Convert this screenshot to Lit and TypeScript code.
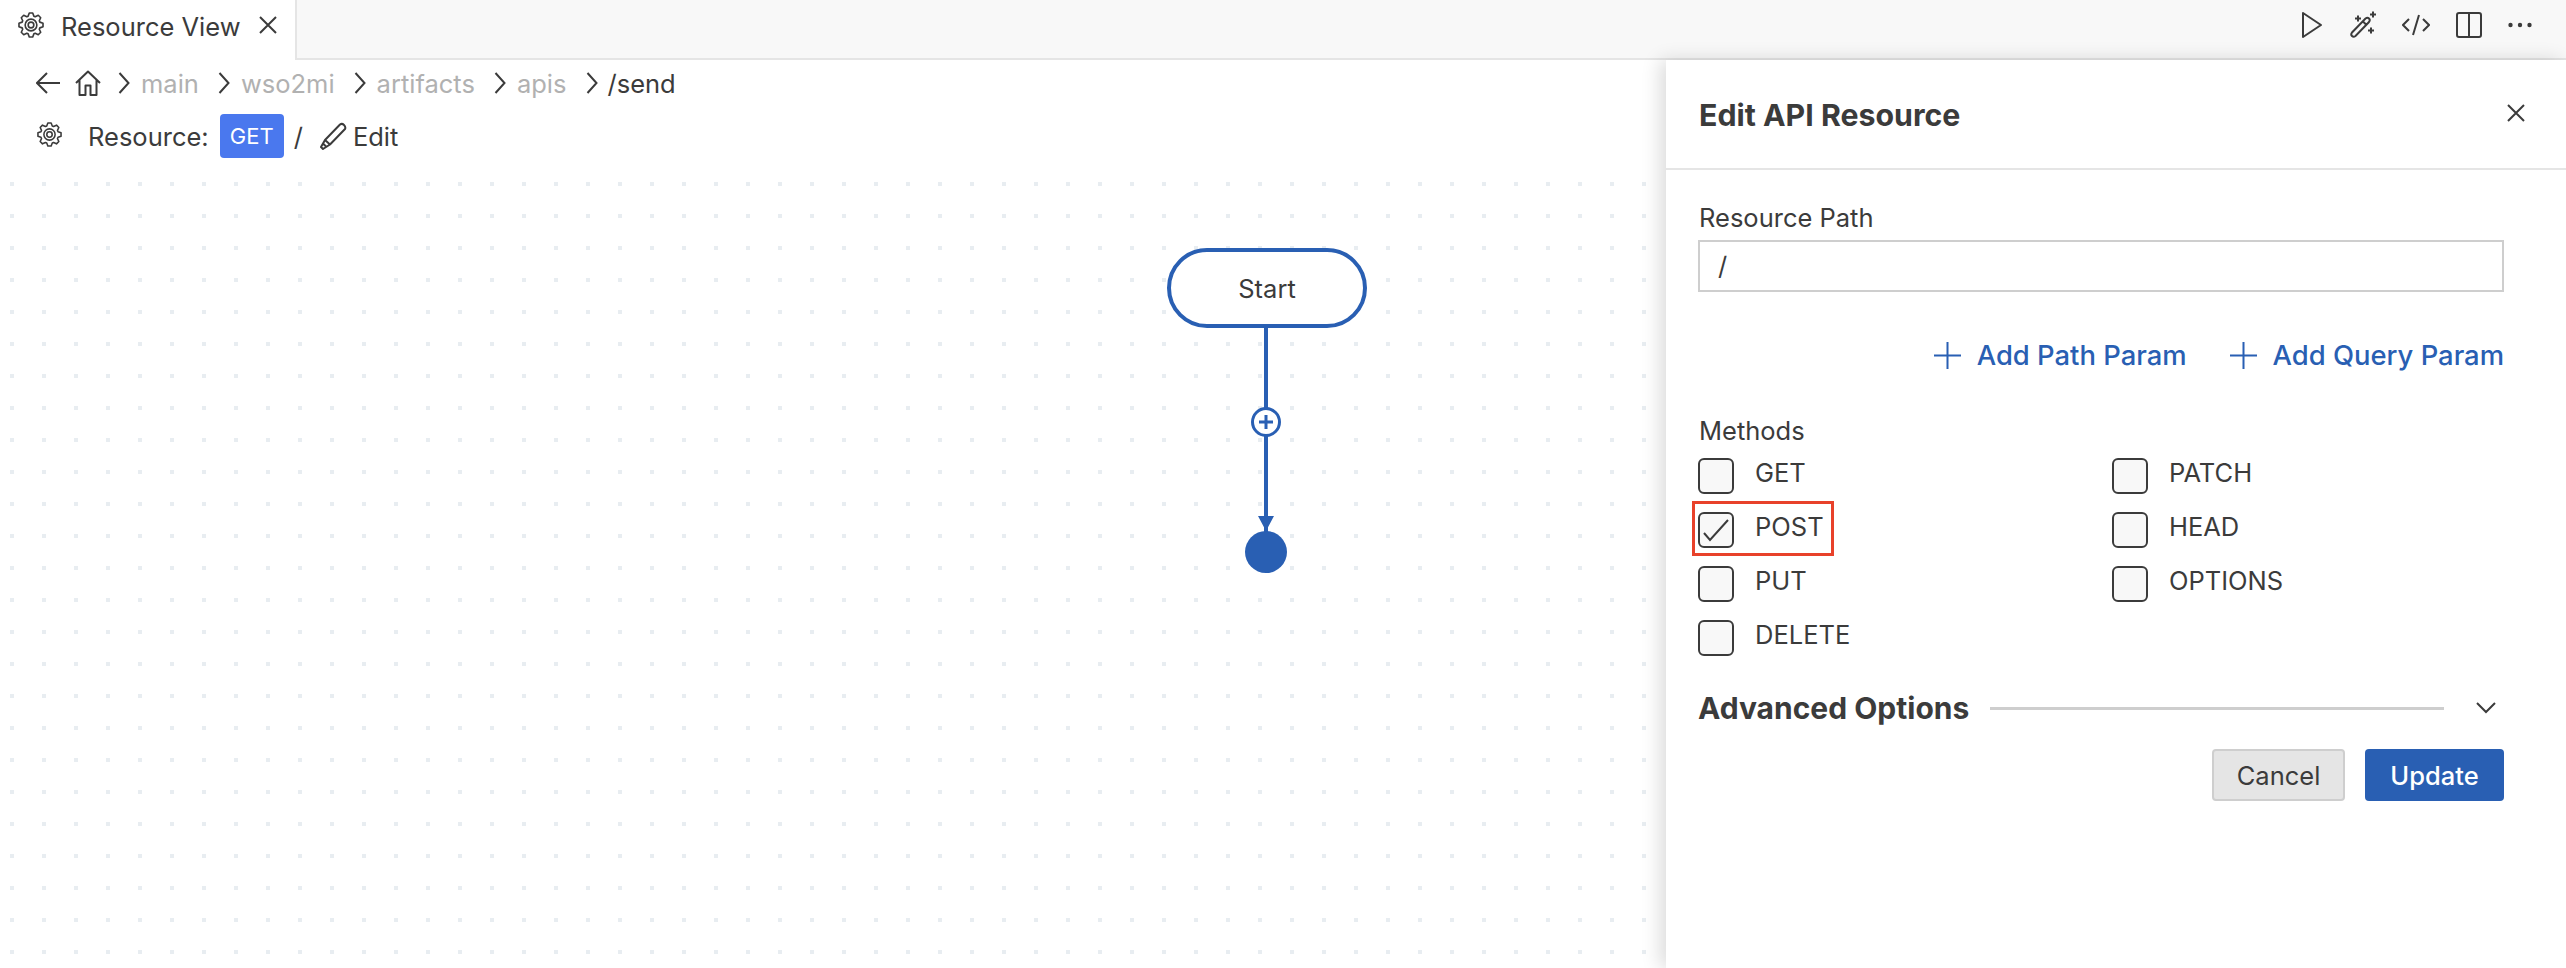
import { LitElement, html, css, svg } from "lit";
import { customElement } from "lit/decorators.js";

// 8 toothed gear outline, centred on 12,12
const gearPath = (): string => {
  const pts: string[] = [];
  const teeth = 8;
  for (let i = 0; i < teeth; i++) {
    const a = (i / teeth) * Math.PI * 2 - Math.PI / 2;
    const step = (Math.PI * 2) / teeth;
    const at = (r: number, off: number) =>
      `${(12 + r * Math.cos(a + off)).toFixed(2)} ${(12 + r * Math.sin(a + off)).toFixed(2)}`;
    pts.push(at(8.6, -step * 0.4), at(11.2, -step * 0.18), at(11.2, step * 0.18), at(8.6, step * 0.4));
  }
  return `M${pts.join("L")}Z`;
};

const gear = (size: number) => html`<svg
  class="icon"
  width=${size}
  height=${size}
  viewBox="0 0 24 24"
  fill="none"
  stroke="#3b3b3b"
  stroke-width="1.5"
  stroke-linejoin="round"
>
  <path d=${gearPath()}></path>
  <circle cx="12" cy="12" r="5.4"></circle>
  <circle cx="12" cy="12" r="2.6"></circle>
</svg>`;

const chevronRight = html`<svg class="icon crumb-chevron" width="12" height="22" viewBox="0 0 12 22" fill="none" stroke="#3b3b3b" stroke-width="2">
  <path d="M1.5 1l9 10-9 10"></path>
</svg>`;

const close = (size: number) => html`<svg class="icon" width=${size} height=${size} viewBox="0 0 18 18" fill="none" stroke="#3b3b3b" stroke-width="2">
  <path d="M1 1l16 16M17 1L1 17"></path>
</svg>`;

const plus = html`<svg class="icon" width="27" height="27" viewBox="0 0 27 27" fill="none" stroke="#295fb3" stroke-width="2">
  <path d="M13.5 0v27M0 13.5h27"></path>
</svg>`;

const checkMark = svg`<path d="M4 19l6 7L28 6" fill="none" stroke="#3b3b3b" stroke-width="2"></path>`;

const METHODS = [
  { name: "GET", checked: false },
  { name: "PATCH", checked: false },
  { name: "POST", checked: true },
  { name: "HEAD", checked: false },
  { name: "PUT", checked: false },
  { name: "OPTIONS", checked: false },
  { name: "DELETE", checked: false },
];

const CRUMBS = ["main", "wso2mi", "artifacts", "apis"];

@customElement("app-root")
export class AppRoot extends LitElement {
  static styles = css`
    :host {
      display: block;
      width: 2566px;
      height: 968px;
      overflow: hidden;
      background: #fff;
      color: #3b3b3b;
      font-family: Inter, "Liberation Sans", sans-serif;
      font-size: 25.5px;
      line-height: 32px;
    }

    * {
      box-sizing: border-box;
    }

    .icon {
      display: block;
      flex: none;
    }

    .tabs {
      display: flex;
      align-items: stretch;
      height: 60px;
      background: #f8f8f8;
      border-bottom: 2px solid #e5e5e5;
    }

    .tab {
      display: flex;
      align-items: center;
      width: 297px;
      height: 60px;
      padding: 0 0 10px 18px;
      background: #fff;
      border-right: 2px solid #e5e5e5;
    }

    .tab-title {
      margin: 3px 18px 0 17px;
    }

    .toolbar {
      display: flex;
      align-items: center;
      margin-left: auto;
      padding: 0 34px 8px 0;
    }

    .tool {
      display: block;
      flex: none;
    }

    .body {
      display: flex;
      height: 908px;
    }

    .main {
      flex: 1;
      min-width: 0;
      display: flex;
      flex-direction: column;
    }

    .crumbs {
      display: flex;
      align-items: center;
      height: 46px;
      padding-left: 36px;
    }

    .crumb-back {
      margin-right: 15px;
    }

    .home {
      margin-right: 17px;
    }

    .crumb-chevron {
      margin-right: 11px;
    }

    .crumb {
      color: #b1b1b1;
      margin: 1px 19px 0 0;
    }

    .crumb-current {
      margin: 1px 0 0 -1px;
      color: #3b3b3b;
    }

    .resource {
      display: flex;
      align-items: center;
      height: 56px;
      padding-left: 37px;
    }

    .resource > .icon:first-child {
      margin-right: 26px;
    }

    .resource-label {
      margin: 5px 11px 0 0;
    }

    .badge {
      display: flex;
      align-items: center;
      justify-content: center;
      width: 64px;
      height: 44px;
      margin-top: 4px;
      background: #4a78ee;
      border-radius: 4px;
      color: #fff;
      font-size: 22px;
    }

    .slash {
      margin: 5px 17px 0 10px;
    }

    .pencil {
      margin-top: 4px;
    }

    .edit {
      margin: 5px 0 0 5px;
    }

    .canvas {
      position: relative;
      flex: 1;
      margin-top: 6px;
    }

    .dots {
      position: absolute;
      inset: 0;
      width: 100%;
      height: 100%;
    }

    /* diagram nodes sit on a free canvas */
    .node-start {
      position: absolute;
      left: 1167px;
      top: 80px;
      width: 200px;
      height: 80px;
      display: flex;
      align-items: center;
      justify-content: center;
      padding-top: 2px;
      background: #fff;
      border: 4px solid #295fb3;
      border-radius: 40px;
    }

    .links {
      position: absolute;
      left: 1230px;
      top: 150px;
    }

    .panel {
      position: relative;
      flex: none;
      width: 900px;
      background: #fff;
      box-shadow: -6px 0 18px rgba(0, 0, 0, 0.14);
    }

    .panel-head {
      display: flex;
      align-items: center;
      justify-content: space-between;
      height: 110px;
      padding: 0 41px 2px 33px;
      border-bottom: 2px solid #e5e5e5;
    }

    .panel-title {
      margin-top: 3px;
      font-size: 30.3px;
      font-weight: 700;
    }

    .panel-body {
      padding: 32px 62px 0 32px;
    }

    .field-label {
      padding-left: 1px;
    }

    .input {
      display: flex;
      align-items: center;
      height: 52px;
      margin-top: 6px;
      padding-left: 18px;
      border: 2px solid #cecece;
    }

    .params {
      display: flex;
      justify-content: flex-end;
      align-items: center;
      gap: 43px;
      margin-top: 47px;
    }

    .param {
      display: flex;
      align-items: center;
      gap: 16px;
      color: #295fb3;
      font-size: 27.4px;
      font-weight: 500;
    }

    .methods-label {
      margin-top: 44px;
      padding-left: 1px;
    }

    .methods {
      display: grid;
      grid-template-columns: 414px 1fr;
      row-gap: 18px;
      margin-top: 11px;
    }

    .method {
      position: relative;
      display: flex;
      gap: 21px;
      height: 36px;
    }

    .box {
      flex: none;
      width: 36px;
      height: 36px;
      background: #f8f8f8;
      border: 2px solid #3b3b3b;
      border-radius: 6px;
    }

    .method-name {
      margin-top: -1px;
    }

    .highlight {
      position: absolute;
      left: -6px;
      top: -11px;
      width: 142px;
      height: 55px;
      border: 3px solid #e8412a;
    }

    .advanced {
      display: flex;
      align-items: center;
      height: 40px;
      margin-top: 32px;
    }

    .advanced-title {
      font-size: 30px;
      font-weight: 700;
    }

    .advanced-line {
      flex: 1;
      height: 3px;
      margin: 0 24px 0 21px;
      background: #cecece;
    }

    .advanced-toggle {
      display: flex;
      justify-content: center;
      width: 36px;
    }

    .actions {
      display: flex;
      justify-content: flex-end;
      gap: 20px;
      margin-top: 21px;
    }

    .btn {
      display: flex;
      align-items: center;
      justify-content: center;
      height: 52px;
      padding-top: 2px;
      border-radius: 4px;
    }

    .btn-cancel {
      width: 133px;
      background: #e5e5e5;
      border: 2px solid #cecece;
    }

    .btn-update {
      width: 139px;
      background: #295fb3;
      color: #fff;
      font-weight: 500;
    }
  `;

  private _toolbar() {
    return html`<div class="toolbar">
      <svg class="tool" style="margin-right:28px" width="20" height="26" viewBox="0 0 20 26" fill="none" stroke="#3b3b3b" stroke-width="2" stroke-linejoin="round">
        <path d="M1 1v24l18-12z"></path>
      </svg>
      <svg class="tool" style="margin-right:24px" width="28" height="28" viewBox="0 0 28 28" fill="none" stroke="#3b3b3b" stroke-width="2">
        <path d="M2 21.500L15.500 7.500q2-1.500 3.500 0t0 3.500L5.500 25q-2 1.500-3.500 0t0-3.500zM5 7.500h6M8 4.500v6M20 3.500h6M23 .5v6M18 19.500h6M21 16.500v6M13 10.500l4 4"></path>
      </svg>
      <svg class="tool" style="margin-right:26px" width="28" height="22" viewBox="0 0 28 22" fill="none" stroke="#3b3b3b" stroke-width="2">
        <path d="M7 5l-6 6 6 6M21 5l6 6-6 6M17 1l-6 20"></path>
      </svg>
      <svg class="tool" style="margin-right:26px" width="26" height="26" viewBox="0 0 26 26" fill="none" stroke="#3b3b3b" stroke-width="2">
        <rect x="1" y="1" width="24" height="24" rx="2"></rect>
        <path d="M13 1v24"></path>
      </svg>
      <svg class="tool" width="24" height="6" viewBox="0 0 24 6" fill="#3b3b3b">
        <circle cx="2.500" cy="3" r="2.200"></circle>
        <circle cx="12" cy="3" r="2.200"></circle>
        <circle cx="21.500" cy="3" r="2.200"></circle>
      </svg>
    </div>`;
  }

  private _diagram() {
    return html`<svg class="links" width="72" height="340" viewBox="0 0 72 340">
      <path d="M36 0V214" stroke="#295fb3" stroke-width="4" fill="none"></path>
      <circle cx="36" cy="104" r="13.500" fill="#fff" stroke="#295fb3" stroke-width="3"></circle>
      <path d="M36 97v14M29 104h14" stroke="#295fb3" stroke-width="3" fill="none"></path>
      <path d="M28 198h16l-8 15z" fill="#295fb3"></path>
      <circle cx="36" cy="234" r="21" fill="#295fb3"></circle>
    </svg>`;
  }

  render() {
    return html`
      <div class="tabs">
        <div class="tab">
          ${gear(26)}
          <span class="tab-title">Resource View</span>
          ${close(18)}
        </div>
        ${this._toolbar()}
      </div>
      <div class="body">
        <div class="main">
          <div class="crumbs">
            <svg class="icon crumb-back" width="24" height="22" viewBox="0 0 24 22" fill="none" stroke="#3b3b3b" stroke-width="2">
              <path d="M11 1L1 11l10 10M1 11h23"></path>
            </svg>
            <svg class="icon home" width="26" height="26" viewBox="0 0 26 26" fill="none" stroke="#3b3b3b" stroke-width="2" stroke-linejoin="round">
              <path d="M1 13L13 1.500 25 13M4.500 10v15H10.500V15.500h5V25h6V10"></path>
            </svg>
            ${CRUMBS.map((c) => html`${chevronRight}<span class="crumb">${c}</span>`)}
            ${chevronRight}<span class="crumb-current">/send</span>
          </div>
          <div class="resource">
            ${gear(25)}
            <span class="resource-label">Resource:</span>
            <span class="badge">GET</span>
            <span class="slash">/</span>
            <svg class="icon pencil" width="28" height="28" viewBox="0 0 28 28" fill="none" stroke="#3b3b3b" stroke-width="2" stroke-linejoin="round">
              <path d="M5 18L20 2.500q2-1.500 4 .5t1 4L10 22.500 3 27 1 25zM5 18l5 4.500M3.500 22l3 3"></path>
            </svg>
            <span class="edit">Edit</span>
          </div>
          <div class="canvas">
            <svg class="dots">
              <defs>
                <pattern id="dot-grid" width="32" height="32" patternUnits="userSpaceOnUse">
                  <rect x="10" y="14" width="4" height="4" fill="#e8edf1"></rect>
                </pattern>
              </defs>
              <rect width="100%" height="100%" fill="url(#dot-grid)"></rect>
            </svg>
            ${this._diagram()}
            <div class="node-start">Start</div>
          </div>
        </div>
        <div class="panel">
          <div class="panel-head">
            <span class="panel-title">Edit API Resource</span>
            ${close(18)}
          </div>
          <div class="panel-body">
            <div class="field-label">Resource Path</div>
            <div class="input">/</div>
            <div class="params">
              <span class="param">${plus}Add Path Param</span>
              <span class="param">${plus}Add Query Param</span>
            </div>
            <div class="methods-label">Methods</div>
            <div class="methods">
              ${METHODS.map(
                (m) => html`<div class="method">
                  <span class="box">
                    ${m.checked
                      ? html`<svg width="32" height="32" viewBox="0 0 32 32">${checkMark}</svg>`
                      : ""}
                  </span>
                  <span class="method-name">${m.name}</span>
                  ${m.checked ? html`<span class="highlight"></span>` : ""}
                </div>`,
              )}
            </div>
            <div class="advanced">
              <span class="advanced-title">Advanced Options</span>
              <span class="advanced-line"></span>
              <span class="advanced-toggle">
                <svg class="icon" width="20" height="12" viewBox="0 0 20 12" fill="none" stroke="#3b3b3b" stroke-width="2">
                  <path d="M1 1l9 9 9-9"></path>
                </svg>
              </span>
            </div>
            <div class="actions">
              <span class="btn btn-cancel">Cancel</span>
              <span class="btn btn-update">Update</span>
            </div>
          </div>
        </div>
      </div>
    `;
  }
}
